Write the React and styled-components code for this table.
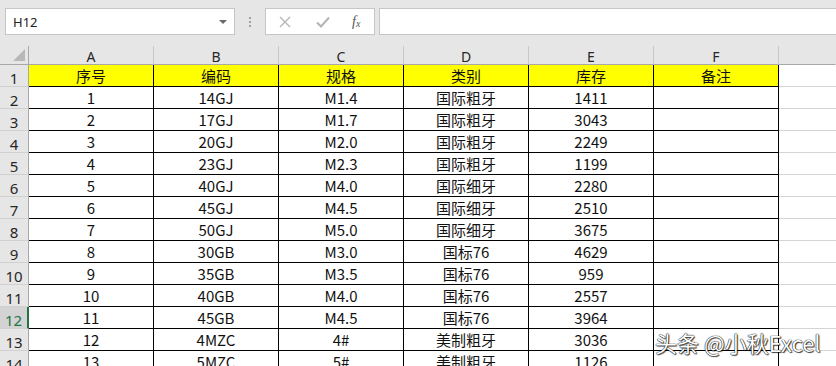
import React from 'react'
import styled, { createGlobalStyle } from 'styled-components'

const GlobalStyle = createGlobalStyle`
  html, body {
    margin: 0;
    padding: 0;
    background: #e6e6e6;
  }
`

const columns = ['A', 'B', 'C', 'D', 'E', 'F']

const rows = [
  ['序号', '编码', '规格', '类别', '库存', '备注'],
  ['1', '14GJ', 'M1.4', '国际粗牙', '1411', ''],
  ['2', '17GJ', 'M1.7', '国际粗牙', '3043', ''],
  ['3', '20GJ', 'M2.0', '国际粗牙', '2249', ''],
  ['4', '23GJ', 'M2.3', '国际粗牙', '1199', ''],
  ['5', '40GJ', 'M4.0', '国际细牙', '2280', ''],
  ['6', '45GJ', 'M4.5', '国际细牙', '2510', ''],
  ['7', '50GJ', 'M5.0', '国际细牙', '3675', ''],
  ['8', '30GB', 'M3.0', '国标76', '4629', ''],
  ['9', '35GB', 'M3.5', '国标76', '959', ''],
  ['10', '40GB', 'M4.0', '国标76', '2557', ''],
  ['11', '45GB', 'M4.5', '国标76', '3964', ''],
  ['12', '4MZC', '4#', '美制粗牙', '3036', ''],
  ['13', '5MZC', '5#', '美制粗牙', '1126', '']
]

const SELECTED_ROW = 12

const App = () => (
  <Page>
    <GlobalStyle />
    <FormulaBar>
      <NameBox>
        <NameText>H12</NameText>
        <DropArrow />
      </NameBox>
      <Dots>
        <span />
        <span />
        <span />
      </Dots>
      <FxButtons>
        <IconSlot>
          <svg width='12' height='12' viewBox='0 0 12 12'>
            <path d='M1 1 L11 11 M11 1 L1 11' stroke='#b4b4b4' strokeWidth='1.3' fill='none' />
          </svg>
        </IconSlot>
        <IconSlot>
          <svg width='14' height='12' viewBox='0 0 14 12'>
            <polyline points='1 6.5 5 10.5 13 1.5' stroke='#b4b4b4' strokeWidth='2' fill='none' />
          </svg>
        </IconSlot>
        <FxText>
          f<sub>x</sub>
        </FxText>
      </FxButtons>
      <FormulaInput />
    </FormulaBar>

    <Sheet>
      <Corner>
        <svg width='12' height='12' viewBox='0 0 12 12'>
          <polygon points='12 0 12 12 0 12' fill='#b8b8b8' />
        </svg>
      </Corner>
      {columns.map(c => (
        <ColHead key={c}>{c}</ColHead>
      ))}
      <ColHead $blank />

      {rows.map((row, i) => {
        const n = i + 1
        return (
          <React.Fragment key={n}>
            <RowHead $selected={n === SELECTED_ROW}>{n}</RowHead>
            {row.map((v, j) => (
              <Cell key={j} $header={n === 1}>
                {v}
              </Cell>
            ))}
            <ExtraCell />
          </React.Fragment>
        )
      })}
    </Sheet>

    <Watermark>头条 @小秋Excel</Watermark>
  </Page>
)

export default App

const Page = styled.div`
  position: relative;
  width: 836px;
  height: 366px;
  overflow: hidden;
  background: #e6e6e6;
`

const FormulaBar = styled.div`
  display: flex;
  align-items: flex-start;
  height: 46px;
  padding: 8px 0 0 5px;
  box-sizing: border-box;
`

const Box = styled.div`
  height: 27px;
  box-sizing: border-box;
  background: #fff;
  border: 1px solid #c6c6c6;
`

const NameBox = styled(Box)`
  width: 230px;
  display: flex;
  align-items: center;
  justify-content: space-between;
  padding: 0 7px 0 7px;
`

const NameText = styled.span`
  font-family: 'Noto Sans', 'Liberation Sans', sans-serif;
  font-size: 13px;
  color: #222;
`

const DropArrow = styled.span`
  width: 0;
  height: 0;
  border-left: 4px solid transparent;
  border-right: 4px solid transparent;
  border-top: 4px solid #6a6a6a;
`

const Dots = styled.div`
  width: 30px;
  height: 27px;
  display: flex;
  flex-direction: column;
  align-items: center;
  justify-content: center;
  gap: 2px;

  span {
    width: 2px;
    height: 2px;
    background: #a0a0a0;
  }
`

const FxButtons = styled(Box)`
  width: 110px;
  display: flex;
  align-items: center;
  padding-left: 12px;
`

const IconSlot = styled.div`
  width: 36px;
  display: flex;
  align-items: center;
  justify-content: flex-start;
  padding-left: 1px;
`

const FxText = styled.span`
  font-family: 'Liberation Serif', serif;
  font-style: italic;
  font-size: 14px;
  color: #555;

  sub {
    font-size: 10px;
    vertical-align: -1px;
  }
`

const FormulaInput = styled(Box)`
  flex: 1;
  margin-left: 4px;
  border-right: none;
`

const Sheet = styled.div`
  display: grid;
  grid-template-columns: 29px repeat(6, 125px) 1fr;
  grid-template-rows: 19px;
  grid-auto-rows: 22px;
  background: #fff;
`

const HeadBase = styled.div`
  box-sizing: border-box;
  background: #e6e6e6;
  display: flex;
  align-items: center;
  justify-content: center;
  font-family: 'Noto Sans', 'Liberation Sans', sans-serif;
  font-size: 14px;
  color: #262626;
`

const Corner = styled(HeadBase)`
  border-right: 1px solid #a8a8a8;
  border-bottom: 1px solid #a8a8a8;
  justify-content: flex-end;
  align-items: flex-end;
  padding: 0 3px 3px 0;
`

const ColHead = styled(HeadBase)`
  border-right: 1px solid ${props => (props.$blank ? '#e6e6e6' : '#c8c8c8')};
  border-bottom: 1px solid #a8a8a8;
  padding-top: 2px;
`

const RowHead = styled(HeadBase)`
  font-size: 15px;
  padding-top: 4px;
  background: ${props => (props.$selected ? '#d3d3d3' : '#e6e6e6')};
  color: ${props => (props.$selected ? '#217346' : '#262626')};
  border-bottom: 1px solid #d0d0d0;
  border-right: ${props => (props.$selected ? '2px solid #217346' : '1px solid #a8a8a8')};
`

const Cell = styled.div`
  box-sizing: border-box;
  display: flex;
  align-items: center;
  justify-content: center;
  background: ${props => (props.$header ? '#ffff00' : '#fff')};
  border-right: 1px solid #000;
  border-bottom: 1px solid #000;
  font-family: 'Noto Sans CJK SC', 'Noto Sans', sans-serif;
  font-size: 15px;
  line-height: 1;
  color: #111;
`

const ExtraCell = styled.div`
  box-sizing: border-box;
  border-bottom: 1px solid #d4d4d4;
`

const Watermark = styled.div`
  position: absolute;
  left: 655px;
  top: 331px;
  font-family: 'Noto Sans CJK SC', 'Noto Sans', sans-serif;
  font-size: 22px;
  line-height: 1;
  color: #fff;
  white-space: nowrap;
  text-shadow:
    0 0 1px #000,
    0 0 1px #000,
    1px 1px 1px rgba(0, 0, 0, 0.7);
`
